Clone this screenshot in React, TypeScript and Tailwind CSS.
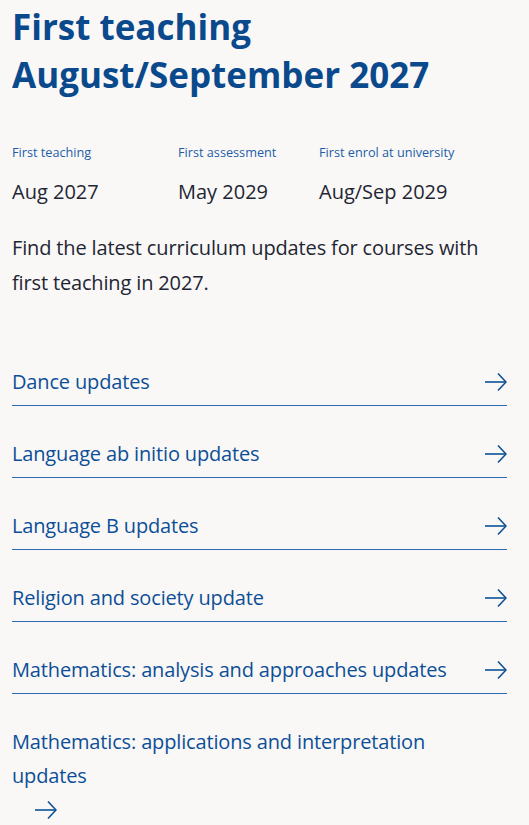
import React from 'react';

const updates = [
  'Dance updates',
  'Language ab initio updates',
  'Language B updates',
  'Religion and society update',
  'Mathematics: analysis and approaches updates',
  'Mathematics: applications and interpretation updates',
];

const Arrow: React.FC = () => (
  <svg width="22" height="20" viewBox="0 0 22 20" fill="none" stroke="currentColor" strokeWidth="1.6">
    <path d="M0 10h21" />
    <path d="M13 1.5l8 8.5-8 8.5" />
  </svg>
);

const App: React.FC = () => {
  return (
    <div
      className="min-h-screen bg-[#f9f8f7] pl-3 pr-[22px] pt-[3px] pb-10"
      style={{ fontFamily: '"Open Sans", Lato, sans-serif' }}
    >
      <h1 className="text-[35px] leading-[48px] font-bold text-[#0a4a8c]">
        First teaching
        <br />
        August/September 2027
      </h1>

      <div className="mt-[43px] grid grid-cols-[166px_141px_1fr]">
        {[
          ['First teaching', 'Aug 2027'],
          ['First assessment', 'May 2029'],
          ['First enrol at university', 'Aug/Sep 2029'],
        ].map(([label, value]) => (
          <div key={label}>
            <div className="text-[12.7px] leading-5 text-[#1e5ea6]">{label}</div>
            <div className="mt-4 text-[20px] leading-7 text-[#1f2633]">{value}</div>
          </div>
        ))}
      </div>

      <p className="mt-6 text-[20px] leading-[35px] tracking-[-0.15px] text-[#1f2633]">
        Find the latest curriculum updates for courses with first teaching in 2027.
      </p>

      <ul className="mt-[34px]">
        {updates.map((title, i) => {
          const last = i === updates.length - 1;
          return (
            <li key={title}>
              <a
                href="#"
                className={`block pt-[31px] text-[20px] leading-[34px] tracking-[-0.15px] text-[#0d4f96] ${
                  last ? '' : 'pb-[6px] border-b border-[#2f6cb2]'
                }`}
              >
                {last ? (
                  <>
                    <span className="block max-w-[465px]">{title}</span>
                    <span className="flex h-[34px] items-center pl-[23px]">
                      <Arrow />
                    </span>
                  </>
                ) : (
                  <span className="flex items-center justify-between">
                    <span>{title}</span>
                    <Arrow />
                  </span>
                )}
              </a>
            </li>
          );
        })}
      </ul>
    </div>
  );
};

export default App;
